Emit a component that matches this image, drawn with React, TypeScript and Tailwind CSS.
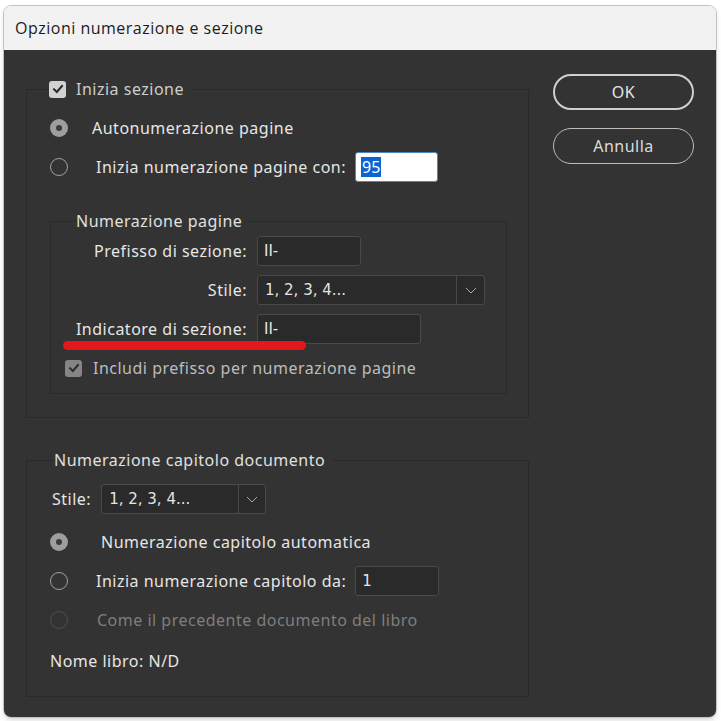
import React from 'react';

const Radio: React.FC<{ checked?: boolean; disabled?: boolean }> = ({ checked, disabled }) => {
    if (checked) {
        return (
            <span className="w-[18px] h-[18px] rounded-full bg-[#9e9e9e] flex items-center justify-center shrink-0">
                <span className="w-[6px] h-[6px] rounded-full bg-[#3a3a3a]" />
            </span>
        );
    }
    return (
        <span
            className={`w-[18px] h-[18px] rounded-full border shrink-0 ${disabled ? 'border-[#4e4e4e]' : 'border-[#a0a0a0]'}`}
        />
    );
};

const Check: React.FC<{ dim?: boolean }> = ({ dim }) => (
    <span
        className={`w-[17px] h-[17px] rounded-[3px] flex items-center justify-center shrink-0 ${dim ? 'bg-[#858585]' : 'bg-[#d2d2d2]'}`}
    >
        <svg width="12" height="12" viewBox="0 0 12 12" fill="none">
            <path d="M2 6.3 L4.8 9 L10 3" stroke={dim ? '#2e2e2e' : '#2a2a2a'} strokeWidth="2" strokeLinecap="square" />
        </svg>
    </span>
);

const Field: React.FC<{ value: string; className: string }> = ({ value, className }) => (
    <div
        className={`h-[30px] rounded-[3px] border border-[#4a4a4a] bg-[#2a2a2a] flex items-center px-[6px] text-[15px] tracking-normal text-[#e4e4e4] font-['DejaVu_Sans',sans-serif] ${className}`}
    >
        {value}
    </div>
);

const Select: React.FC<{ value: string; className: string; arrow: string }> = ({ value, className, arrow }) => (
    <div
        className={`h-[30px] rounded-[3px] border border-[#4a4a4a] bg-[#2a2a2a] flex items-stretch text-[15px] tracking-normal text-[#e4e4e4] font-['DejaVu_Sans',sans-serif] ${className}`}
    >
        <div className="flex-1 flex items-center px-[7px]">{value}</div>
        <div className={`border-l border-[#4a4a4a] flex items-center justify-center ${arrow}`}>
            <svg width="12" height="7" viewBox="0 0 12 7" fill="none">
                <path d="M1 1 L6 6 L11 1" stroke="#a8a8a8" strokeWidth="1" />
            </svg>
        </div>
    </div>
);

export default function App() {
    return (
        <div className="w-[721px] h-[721px] bg-white pt-[5px] pl-[3px] font-['Noto_Sans',sans-serif]">
            <div className="w-[714px] h-[713px] rounded-[8px] border border-[#c4c4c4] overflow-hidden flex flex-col shadow-md">
                <div className="h-[44px] bg-[#f2f2f2] flex items-center pl-[11px] text-[16px] tracking-[0.5px] text-[#1c1c1c] font-['Open_Sans',sans-serif]">
                    Opzioni numerazione e sezione
                </div>
                <div className="flex-1 bg-[#333333] flex items-start">
                    <div className="ml-[22px] pt-[27px] w-[503px] text-[16px] tracking-[0.5px] text-[#e6e6e6]">
                        {/* Inizia sezione */}
                        <fieldset className="border border-[#2a2a2a] pb-[23px]">
                            <legend className="ml-[22px] h-[24px] flex items-center gap-[10px] pr-[6px] text-[#cdcdcd]">
                                <Check />
                                <span>Inizia sezione</span>
                            </legend>
                            <div className="mt-[12px] h-[30px] flex items-center pl-[23px]">
                                <Radio checked />
                                <span className="ml-[24px]">Autonumerazione pagine</span>
                            </div>
                            <div className="mt-[9px] h-[30px] flex items-center pl-[23px]">
                                <Radio />
                                <span className="ml-[28px]">Inizia numerazione pagine con:</span>
                                <div className="ml-[9px] w-[83px] h-[30px] bg-white border border-[#4f86c6] rounded-[3px] flex items-center pl-[5px]">
                                    <span className="bg-[#0a64d2] text-white text-[16px] leading-[20px] px-[1px] tracking-normal">95</span>
                                </div>
                            </div>

                            <fieldset className="mt-[27px] ml-[23px] w-[457px] border border-[#2a2a2a] pb-[13px]">
                                <legend className="ml-[25px] h-[24px] flex items-center pr-[6px] text-[#e0e0e0]">
                                    Numerazione pagine
                                </legend>
                                <div className="mt-[3px] flex flex-col gap-[9px]">
                                    <div className="h-[30px] flex items-center gap-[10px]">
                                        <span className="w-[196px] text-right">Prefisso di sezione:</span>
                                        <Field value="II-" className="w-[104px]" />
                                    </div>
                                    <div className="h-[30px] flex items-center gap-[10px]">
                                        <span className="w-[196px] text-right">Stile:</span>
                                        <Select value="1, 2, 3, 4..." className="w-[228px]" arrow="w-[28px]" />
                                    </div>
                                    <div className="relative h-[30px] flex items-center gap-[10px]">
                                        <span className="w-[196px] text-right">Indicatore di sezione:</span>
                                        <Field value="II-" className="w-[164px]" />
                                        <div className="absolute left-[12px] top-[27px] w-[243px] h-[9px] rounded-full bg-[#e3171c]" />
                                    </div>
                                </div>
                                <div className="mt-[12px] h-[24px] flex items-center pl-[14px] gap-[11px] text-[#bdbdbd]">
                                    <Check dim />
                                    <span>Includi prefisso per numerazione pagine</span>
                                </div>
                            </fieldset>
                        </fieldset>

                        {/* Numerazione capitolo */}
                        <fieldset className="mt-[30px] border border-[#2a2a2a] pb-[23px]">
                            <legend className="ml-[27px] h-[24px] flex items-center pr-[6px] text-[#e0e0e0]">
                                Numerazione capitolo documento
                            </legend>
                            <div className="mt-[12px] h-[30px] flex items-center pl-[25px] gap-[10px]">
                                <span>Stile:</span>
                                <Select value="1, 2, 3, 4..." className="w-[165px]" arrow="w-[27px]" />
                            </div>
                            <div className="mt-[13px] h-[30px] flex items-center pl-[23px]">
                                <Radio checked />
                                <span className="ml-[33px]">Numerazione capitolo automatica</span>
                            </div>
                            <div className="mt-[9px] h-[30px] flex items-center pl-[23px]">
                                <Radio />
                                <span className="ml-[28px]">Inizia numerazione capitolo da:</span>
                                <Field value="1" className="ml-[9px] w-[84px]" />
                            </div>
                            <div className="mt-[9px] h-[30px] flex items-center pl-[23px] text-[#7e7e7e]">
                                <Radio disabled />
                                <span className="ml-[29px]">Come il precedente documento del libro</span>
                            </div>
                            <div className="mt-[14px] h-[24px] flex items-center pl-[23px] text-[#e6e6e6]">
                                Nome libro: N/D
                            </div>
                        </fieldset>
                    </div>

                    <div className="ml-[24px] mt-[24px] w-[141px] flex flex-col gap-[18px] text-[16px] tracking-[0.5px]">
                        <button className="h-[36px] rounded-full border-[2.5px] border-[#cfcfcf] text-[#e6e6e6]">OK</button>
                        <button className="h-[36px] rounded-full border border-[#bdbdbd] text-[#dcdcdc]">Annulla</button>
                    </div>
                </div>
            </div>
        </div>
    );
}
